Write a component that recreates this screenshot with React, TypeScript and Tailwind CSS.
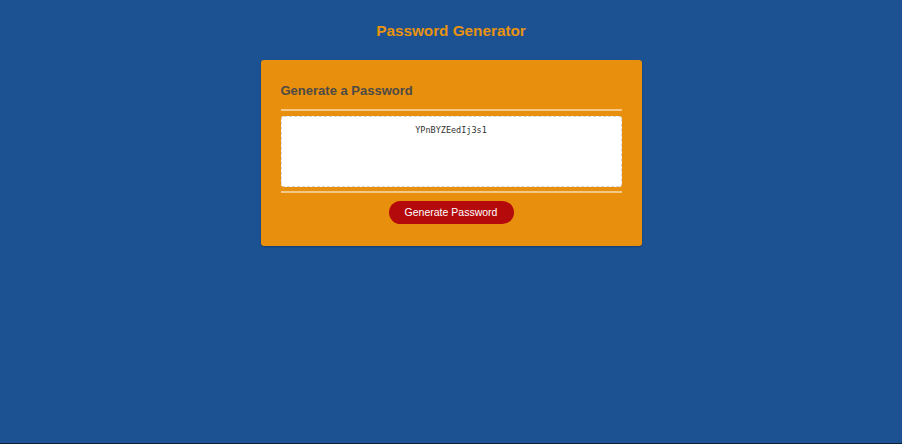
export default function App() {
  return (
    <div className="w-full h-[444px] bg-[#1c5292] flex flex-col items-center font-['Liberation_Sans',Arial,sans-serif] relative">
      <h1 className="mt-[22px] text-[15.3px] leading-[18px] font-bold text-[#e8930f]">
        Password Generator
      </h1>
      <div className="mt-[20px] w-[381px] bg-[#e8900d] rounded-[3px] px-5 pt-[23px] pb-[22px] flex flex-col shadow-[0_1px_2px_rgba(0,0,0,0.25)]">
        <h2 className="text-[13px] leading-[16px] font-bold text-[#4e4a44]">
          Generate a Password
        </h2>
        <div className="mt-[10px] h-[2px] bg-[#f3c98a]" />
        <div className="mt-[5px] h-[71px] bg-white rounded-[3px] border border-dashed border-[#d6d6d6] pt-[7px] text-center font-['DejaVu_Sans_Mono',monospace] text-[8.5px] leading-[12px] text-[#333]">
          YPnBYZEedIj3s1
        </div>
        <div className="mt-[4px] h-[2px] bg-[#f3c98a]" />
        <div className="mt-[8px] flex justify-center">
          <button className="h-[23px] w-[125px] rounded-full bg-[#b40a0b] text-white text-[10.5px]">
            Generate Password
          </button>
        </div>
      </div>
      <div className="absolute bottom-0 left-0 w-full h-[1px] bg-[#0c2036]" />
    </div>
  );
}
